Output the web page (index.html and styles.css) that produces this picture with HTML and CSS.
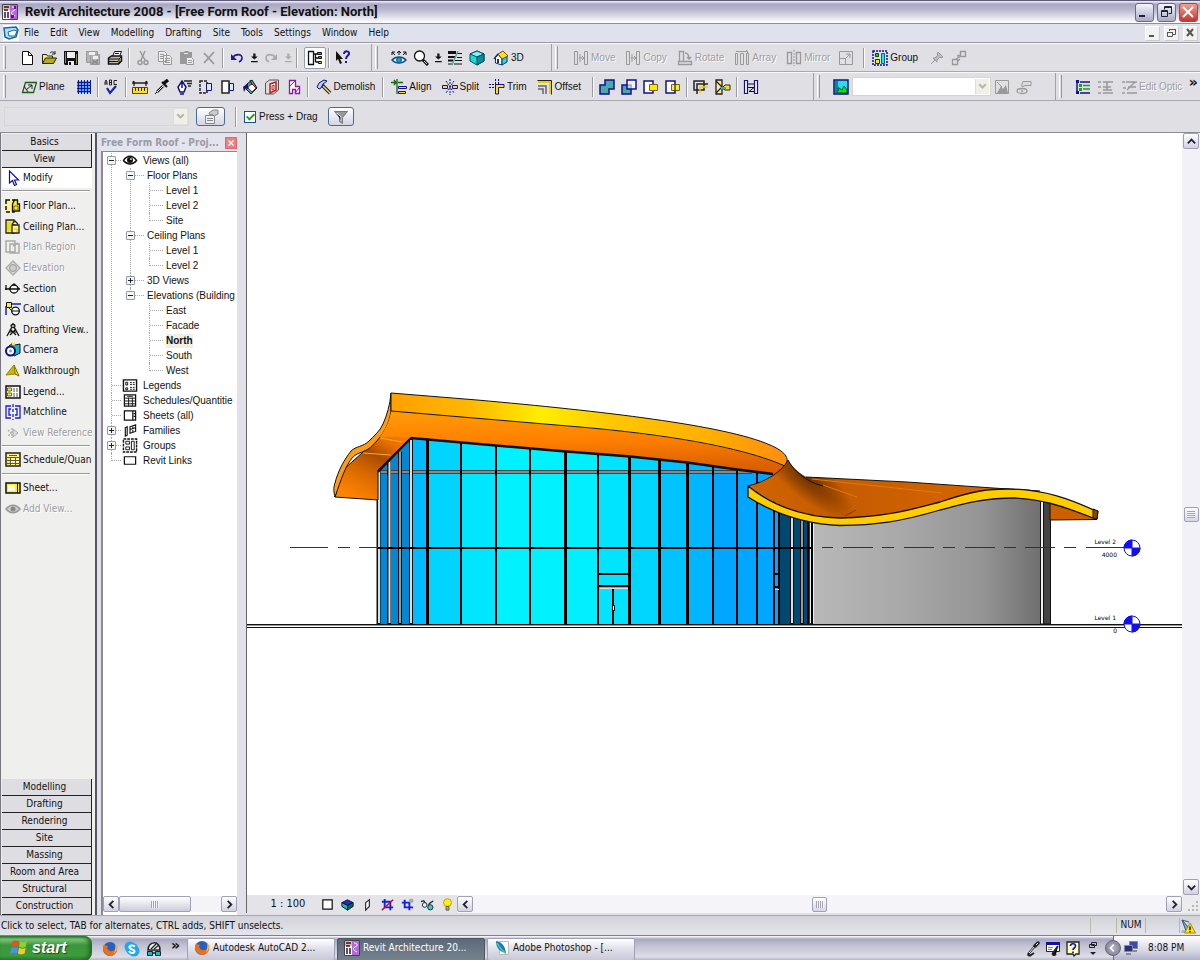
FILE: index.html
```
<!DOCTYPE html>
<html lang="en">
<head>
<meta charset="utf-8">
<title>Revit Architecture 2008 - [Free Form Roof - Elevation: North]</title>
<link rel="stylesheet" href="styles.css">
</head>
<body>
<header class="title-bar">
  <svg class="ico" viewBox="0 0 16 16"><path fill="#fff" stroke="#444" d="M.5.5h15v15H.5z"/><path fill="#b06ad8" d="M8 1h7v14H8z"/><path fill="#e8b890" d="M1 1h7v5H1z"/><path stroke="#301030" stroke-width="1.500" fill="none" d="M2 3h5M2 6h4M3 8v6M6 8v6"/><path stroke="#fff" fill="none" d="M10 3c4 0 4 3 1 4s-1 4 2 5"/><path fill="#701080" d="M9 11h3v3H9zM12 2h2v3h-2z"/></svg>
  <h1>Revit Architecture 2008 - [Free Form Roof - Elevation: North]</h1>
  <div class="window-buttons">
    <button aria-label="Minimize"><svg viewBox="0 0 16 16"><path fill="#223" d="M3 11h6v2H3z"/></svg></button>
    <button aria-label="Restore"><svg viewBox="0 0 16 16"><path fill="none" stroke="#223" d="M6.500 5.500v-3h7v7h-3M6 3.500h7M3.500 6.500h6v6h-6zM3 7.500h7"/></svg></button>
    <button class="close" aria-label="Close"><svg viewBox="0 0 16 16"><path stroke="#fff" stroke-width="2" d="M3 3l10 10M13 3L3 13"/></svg></button>
  </div>
</header>

<nav class="menu-bar">
  <svg class="ico" viewBox="0 0 16 16"><path fill="#fff" d="M0 0h16v16H0z"/><path fill="#b8dff0" stroke="#1468a0" stroke-width="1.500" d="M1 3l12-1 2 3-2 7-7 2-4-2z"/><path fill="#fff" stroke="#1468a0" d="M5 7l6-2 3 1-2 5H6z"/></svg>
  <button>File</button><button>Edit</button><button>View</button><button>Modelling</button><button>Drafting</button><button>Site</button><button>Tools</button><button>Settings</button><button>Window</button><button>Help</button>
  <div class="doc-buttons">
    <button aria-label="Minimize view"><svg viewBox="0 0 12 12"><path fill="#555" d="M3 8h5v2H3z"/></svg></button>
    <button aria-label="Restore view"><svg viewBox="0 0 12 12"><path fill="none" stroke="#555" d="M4.500 4V2.500h6v5H8M4 2.500h7M2.500 5.500h5v4h-5zM2 5.500h6"/></svg></button>
    <button aria-label="Close view"><svg viewBox="0 0 12 12"><path stroke="#555" stroke-width="2" d="M3 2l6 7M9 2L3 9"/></svg></button>
  </div>
</nav>

<div class="toolbar-row">
  <div class="band standard">
    <i class="grip"></i>
    <button aria-label="New"><svg class="ico" viewBox="0 0 16 16"><path fill="#fff" stroke="#111" d="M3.500 1.500h6l4 4v9h-10z"/><path fill="none" stroke="#111" d="M9.500 1.500v4h4"/></svg></button>
    <button aria-label="Open"><svg class="ico" viewBox="0 0 16 16"><path fill="#ffef60" stroke="#222" d="M1.500 13.500v-9h4l1 1.500h5v2"/><path fill="#b0ae20" stroke="#222" d="M1.500 13.500l3-5.500h11l-3 5.500z"/><path fill="none" stroke="#222" d="M9 3c2-2 4-1 5 1m0-3v3h-3"/></svg></button>
    <button aria-label="Save"><svg class="ico" viewBox="0 0 16 16"><path fill="#111" d="M1 1h14v14H2l-1-1z"/><path fill="#8c8a50" d="M2 2h1v11H2zM13 4h1v10h-1z"/><path fill="#eee" d="M4 2h8v6H4zM5 11h6v4H5z"/><path fill="#111" d="M6 12h2v3H6z"/></svg></button>
    <button class="off" aria-label="Save to central"><svg class="ico" viewBox="0 0 16 16"><path fill="#b4b4b8" stroke="#999" d="M1.500 1.500h11v11h-11zM5.500 4.500h9v10h-9z"/><path fill="#eee" d="M4 2h6v3H4zM8 6h5v3H8z"/><path stroke="#888" stroke-width="1.500" d="M7 10l6 4M7 14l6-4"/></svg></button>
    <button aria-label="Print"><svg class="ico" viewBox="0 0 16 16"><path fill="#fff" stroke="#111" d="M5.500 6.500l2-5h7l-2 5z"/><path fill="#bbb" stroke="#111" stroke-width="1.500" d="M1.500 8l3-2h10v5l-3 3h-10z"/><path stroke="#111" d="M2 9h10M2 11.500h9M12 9l2-2M8 3.500h4M12 9v5"/><path fill="#fd2" d="M8 10h2v1H8z"/></svg></button>
    <i class="sep"></i>
    <button class="off" aria-label="Cut"><svg class="ico" viewBox="0 0 16 16"><path fill="none" stroke="#999" stroke-width="1.500" d="M5 1l5 9M10 1L6 10"/><circle cx="5" cy="12.500" r="2" fill="none" stroke="#999" stroke-width="1.500"/><circle cx="11" cy="12.500" r="2" fill="none" stroke="#999" stroke-width="1.500"/></svg></button>
    <button class="off" aria-label="Copy"><svg class="ico" viewBox="0 0 16 16"><path fill="#eee" stroke="#999" d="M1.500 1.500h6l2 2v8h-8zM6.500 5.500h6l2 2v7h-8z"/><path stroke="#999" d="M3 4.500h4M3 6.500h3M3 8.500h3M8 8.500h5M8 10.500h5M8 12.500h5"/></svg></button>
    <button class="off" aria-label="Paste"><svg class="ico" viewBox="0 0 16 16"><path fill="#999" d="M1 2h4l1-1h3l1 1h3v5H7v7H1z"/><path fill="#eee" d="M5 3h4v1H5z"/><path fill="#eee" stroke="#999" d="M7.500 7.500h5l2 2v5h-7z"/><path stroke="#999" d="M9 10.500h4M9 12.500h4"/></svg></button>
    <button class="off" aria-label="Delete"><svg class="ico" viewBox="0 0 16 16"><path stroke="#999" stroke-width="1.800" d="M3 3l10 11M13 2L3 13"/></svg></button>
    <i class="sep"></i>
    <button aria-label="Undo"><svg class="ico" viewBox="0 0 16 16"><path fill="none" stroke="#1a1aa0" stroke-width="1.600" d="M3 8c3-4 10-5 10 0 0 2-1 3-3 4"/><path fill="#1a1aa0" d="M2 4v6h6z"/></svg></button>
    <button class="narrow" aria-label="Undo list"><svg class="ico" viewBox="0 0 16 16"><path fill="#111" d="M7 2h3v4h3L8.500 10 4 6h3zM4 12h9v1.500H4z"/></svg></button>
    <button class="off" aria-label="Redo"><svg class="ico" viewBox="0 0 16 16"><path fill="none" stroke="#aaa" stroke-width="1.600" d="M13 8c-3-4-10-5-10 0 0 2 1 3 3 4"/><path fill="#aaa" d="M14 4v6H8z"/></svg></button>
    <button class="narrow off" aria-label="Redo list"><svg class="ico" viewBox="0 0 16 16"><path fill="#aaa" d="M7 2h3v4h3L8.500 10 4 6h3zM4 12h9v1.500H4z"/></svg></button>
    <i class="sep"></i>
    <button class="pressed" aria-label="Project browser"><svg class="ico" viewBox="0 0 16 16"><path fill="none" stroke="#111" stroke-width="1.300" d="M1.500 1.500h5v13h-5zM6.500 4h4M8.500 4v8M8.500 8h3M8.500 12h3"/><path fill="#2aa" stroke="#111" d="M10.500 2.500h4v2h-4zM11.500 6.500h3v2h-3z"/><path fill="#dd2" stroke="#111" d="M11.500 11.500h3v2h-3z"/></svg></button>
    <i class="sep"></i>
    <button aria-label="Context help"><svg class="ico" viewBox="0 0 16 16"><path fill="#111" d="M1 1v10l2-2 2 5 2-1-2-4h3z"/><path fill="none" stroke="#1a1aa0" stroke-width="2" d="M9 4c0-4 6-3 5 0-1 2-3 2-3 5"/><path fill="#1a1aa0" d="M10 11h2v2h-2z"/></svg></button>
  </div>
  <div class="band views">
    <i class="grip"></i>
    <button aria-label="Dynamic view"><svg class="ico" viewBox="0 0 16 16"><path fill="#fff" stroke="#124a8a" stroke-width="1.500" d="M1 10c4-4 10-4 14 0-4 4-10 4-14 0z"/><circle cx="8" cy="10" r="2.500" fill="#08b0a8" stroke="#124a8a"/><path fill="none" stroke="#111" d="M1 2l3 3M15 2l-3 3M8 1v4M6 3l2-2 2 2M1 5V2h3M15 5V2h-3"/></svg></button>
    <button aria-label="Zoom"><svg class="ico" viewBox="0 0 16 16"><circle cx="6.500" cy="6" r="5" fill="#fff" stroke="#111" stroke-width="1.300"/><path stroke="#111" stroke-width="3" d="M10 10l5 5"/><path stroke="#ee2" d="M11 11l3 3"/></svg></button>
    <button class="narrow" aria-label="Zoom list"><svg class="ico" viewBox="0 0 16 16"><path fill="#111" d="M7 2h3v4h3L8.500 10 4 6h3zM4 12h9v1.500H4z"/></svg></button>
    <button aria-label="Thin lines"><svg class="ico" viewBox="0 0 16 16"><path stroke="#111" stroke-width="3" d="M1 2.500h8"/><path stroke="#111" stroke-width="2" d="M1 7h7M1 10.500h5"/><path stroke="#111" d="M1 14h4M10 3.500h5M10 7.500h5M8 10.500h7M7 14h8"/><path stroke="#4aa" stroke-width="1.500" d="M11 1L5 15"/></svg></button>
    <button aria-label="Default 3D view"><svg class="ico" viewBox="0 0 16 16"><path fill="#20d8d8" stroke="#064860" d="M1 4l7-3 7 3v7l-7 4-7-4z"/><path fill="#80f0f0" stroke="#064860" d="M1 4l7 3 7-3-7-3z"/><path fill="#089098" stroke="#064860" d="M8 7l7-3v7l-7 4z"/></svg></button>
    <button class="labelled"><svg class="ico" viewBox="0 0 16 16"><path fill="#fff" stroke="#14307a" d="M2.500 7.500L5 4l4 5v6l-6.500-2z"/><path fill="#20d8e8" stroke="#14307a" d="M9 9l5-3v6l-5 3z"/><path fill="#ffe020" stroke="#705008" d="M5 4l5-3 5 5-6 3z"/><path stroke="#14307a" stroke-width="1.500" d="M1 9l4-5"/><path fill="#14307a" d="M4 9h2v4H4z"/></svg>3D</button>
  </div>
  <div class="band edit">
    <i class="grip"></i>
    <button class="labelled off" disabled><svg class="ico" viewBox="0 0 16 16"><path fill="none" stroke="#999" d="M1.500 1.500h3v13h-3zM11.500 1.500h3v13h-3zM7 4v8M6 8h4M9 6l2 2-2 2"/></svg>Move</button>
    <button class="labelled off" disabled><svg class="ico" viewBox="0 0 16 16"><path fill="none" stroke="#999" d="M1.500 1.500h3v13h-3zM11.500 1.500h3v13h-3zM7 4v8M6 8h4M9 6l2 2-2 2"/></svg>Copy</button>
    <button class="labelled off" disabled><svg class="ico" viewBox="0 0 16 16"><path fill="none" stroke="#999" stroke-width="1.300" d="M2.500 1.500h4v10h-4zM1.500 11.500h13v3h-13zM8 3c3 0 4 2 4 6M10 7l2 2 2-2"/></svg>Rotate</button>
    <button class="labelled off" disabled><svg class="ico" viewBox="0 0 16 16"><path fill="none" stroke="#999" d="M1.500 3.500h2v11h-2zM6.500 3.500h3v11h-3zM12.500 3.500h2v11h-2zM2 1.500h11M12 0l2 2-2 2"/></svg>Array</button>
    <button class="labelled off" disabled><svg class="ico" viewBox="0 0 16 16"><path fill="none" stroke="#999" stroke-width="1.300" d="M1.500 2.500h4v11h-4zM10.500 2.500h4v11h-4z"/><path stroke="#999" stroke-dasharray="2 1" d="M8 0v16"/></svg>Mirror</button>
    <button class="off" disabled aria-label="Resize"><svg class="ico" viewBox="0 0 16 16"><path fill="none" stroke="#999" d="M1.500 1.500h13v13h-13zM1.500 8.500h6v6M7 9l5-5M8 4h4v4"/></svg></button>
    <i class="sep lead"></i>
    <button class="labelled"><svg class="ico" viewBox="0 0 16 16"><path fill="none" stroke="#10108c" stroke-width="1.500" stroke-dasharray="2 1" d="M1 1h14v14H1z"/><path fill="#28c828" stroke="#064a10" d="M3.500 3.500h3v3h-3z"/><path fill="#ee2" stroke="#222" d="M3.500 9.500h4v4h-4z"/><path fill="#20e0e8" stroke="#069" d="M9.500 3.500h3v10h-3z"/></svg>Group</button>
    <button class="off lead" disabled aria-label="Pin"><svg class="ico" viewBox="0 0 16 16"><path fill="#bbb" stroke="#999" d="M9 2l5 5-2 1-1-1-3 3v2L4 8h2l3-3-1-1zM6 10l-4 4"/></svg></button>
    <button class="off" disabled aria-label="Link"><svg class="ico" viewBox="0 0 16 16"><path fill="none" stroke="#999" stroke-width="1.300" d="M9.500 1.500h5v5h-5zM1.500 9.500h5v5h-5zM5 9l5-3M6 6l4-1M7 11l2-2"/></svg></button>
  </div>
</div>

<div class="toolbar-row">
  <div class="band tools">
    <i class="grip"></i>
    <button class="labelled"><svg class="ico" viewBox="0 0 16 16"><path fill="none" stroke="#146414" stroke-width="1.300" d="M4.500 3.500h11l-3 10h-11z"/><path stroke="#222" fill="none" d="M5 11l6-5M7 6h4v4M3 7l4 6"/></svg>Plane</button>
    <button class="lead" aria-label="Grid"><svg class="ico" viewBox="0 0 16 16"><path fill="#6aa4f8" d="M1 2h14v12H1z"/><path stroke="#0a1a9c" d="M2.500 1v14M5.500 1v14M8.500 1v14M11.500 1v14M1 3.500h14M1 6.500h14M1 9.500h14M1 12.500h14M14.500 1v14"/></svg></button>
    <i class="sep"></i>
    <button aria-label="Spelling"><svg class="ico" viewBox="0 0 16 16"><path fill="none" stroke="#222" d="M1 6V3l1-2 1 2v3M1 4h2M5.500 1v5h2V1zM5 3.500h3M13 1.500h-3v4h3"/><path fill="none" stroke="#1428a0" stroke-width="2.200" d="M3 9l3 5 6-7"/></svg></button>
    <i class="sep"></i>
    <button aria-label="Dimension"><svg class="ico" viewBox="0 0 16 16"><path fill="none" stroke="#222" stroke-width="1.300" d="M2 7V2M14 7V2M0 4h16M1 2l2 3M13 5l2-3"/><path fill="#ffe020" stroke="#554400" d="M.5 8.500h15v6H.5z"/><path stroke="#222" d="M3.500 9v3M6.500 9v3M9.500 9v3M12.500 9v3"/></svg></button>
    <button aria-label="Match type"><svg class="ico" viewBox="0 0 16 16"><path stroke="#111" stroke-width="3.500" d="M9 5l5-4"/><path stroke="#111" stroke-width="2" d="M8 3l5 5"/><path stroke="#111" stroke-width="2.500" d="M9 7l-6 6"/><path stroke="#fff" d="M9 7l-6 6"/><path stroke="#111" d="M3 13l-2 2"/></svg></button>
    <button aria-label="Linework"><svg class="ico" viewBox="0 0 16 16"><path fill="#fff" stroke="#12127c" stroke-width="1.500" d="M6 2l4 6-2 5H4L2 8zM6 3v6M4 15h4"/><path stroke="#222" stroke-width="1.500" d="M8 2h8M11 4.500h5M12 7h3"/></svg></button>
    <button aria-label="Split face"><svg class="ico" viewBox="0 0 16 16"><path fill="none" stroke="#222" stroke-width="1.500" stroke-dasharray="3 1" d="M2 2h7v12H2z"/><path fill="#d8e8ff" stroke="#12128c" d="M8.500 4.500h5v7h-5z"/></svg></button>
    <button aria-label="Paint face"><svg class="ico" viewBox="0 0 16 16"><path fill="#fff" stroke="#222" stroke-width="1.500" d="M2 2h7v12H2z"/><path fill="#d8e8ff" stroke="#12128c" d="M9.500 4.500h4v7h-4z"/></svg></button>
    <button aria-label="Paint"><svg class="ico" viewBox="0 0 16 16"><path fill="#2ab0b0" stroke="#111" d="M5 5l5-4 5 8-6 6-5-5z"/><path fill="#fff" stroke="#a02020" d="M7 7l3-2 4 4-4 4-4-4z"/><path fill="#12127c" d="M1 8l5-4v6l-2-1-2 4z"/><path stroke="#111" d="M8 1l2 5"/></svg></button>
    <button aria-label="Opening"><svg class="ico" viewBox="0 0 16 16"><path fill="#ddd" stroke="#555" d="M1.500 4l4-3h9v10l-5 4h-8z"/><path fill="#fff" stroke="#c81818" stroke-width="1.500" d="M6 5l6-2v8l-6 3z"/><path fill="none" stroke="#c81818" d="M8 7l2-1v4l-2 1z"/></svg></button>
    <button aria-label="Wall joins"><svg class="ico" viewBox="0 0 16 16"><path fill="#fff" stroke="#8a18a0" stroke-width="1.300" d="M3.500 1.500h6v6h4v7h-4v-4h-3v4h-3z"/><path stroke="#8a18a0" d="M3 8l6-6M9 14l4-5"/></svg></button>
    <i class="sep"></i>
    <button class="labelled"><svg class="ico" viewBox="0 0 16 16"><path stroke="#11116c" stroke-width="3.500" d="M6 6l8 8"/><path stroke="#ffe020" stroke-width="1.500" d="M7 7l7 7"/><path fill="#b8d0f0" stroke="#11116c" d="M1 8l2-4 5-3 3 1-4 3-2 4-2 1z"/></svg>Demolish</button>
    <i class="sep"></i>
    <button class="labelled"><svg class="ico" viewBox="0 0 16 16"><path fill="none" stroke="#146414" stroke-width="1.300" d="M6 0v15M0 3.500h5M3 1l2 2.500L3 6M12 3.500H7"/><path fill="#ffe020" stroke="#12128c" d="M7.500 7.500h8v2h-8zM7.500 12.500h7v2h-7z"/></svg>Align</button>
    <button class="labelled"><svg class="ico" viewBox="0 0 16 16"><path stroke="#12128c" stroke-dasharray="2 1" d="M8 0v16M4 2l8 12M12 2L4 14"/><path fill="#ffe020" stroke="#12128c" d="M.5 6.500h5v3h-5zM10.500 6.500h5v3h-5z"/></svg>Split</button>
    <button class="labelled"><svg class="ico" viewBox="0 0 16 16"><path stroke="#12128c" stroke-dasharray="2 1" d="M0 5.500h7M0 8.500h6M6.500 0v6M9.500 0v5"/><path fill="#ffe020" stroke="#12128c" d="M6.500 15v-9.500H15v3H9.500V15z"/></svg>Trim</button>
    <button class="labelled"><svg class="ico" viewBox="0 0 16 16"><path fill="none" stroke="#222" d="M.5 1.500h14v14"/><path fill="none" stroke="#e8d000" stroke-width="2" d="M1 3h12v12"/><path fill="none" stroke="#666" stroke-width="1.500" d="M1 7h8v8M1 10h5v5"/></svg>Offset</button>
    <i class="sep lead"></i>
    <button aria-label="Join"><svg class="ico" viewBox="0 0 16 16"><path fill="#4aa8a8" stroke="#12128c" stroke-width="1.500" d="M6 1h9v9h-5v5H1V6h5z"/></svg></button>
    <button aria-label="Unjoin"><svg class="ico" viewBox="0 0 16 16"><path fill="#4aa8a8" stroke="#12128c" stroke-width="1.500" d="M1 6h9v9H1z"/><path fill="#fff" fill-opacity=".6" stroke="#12128c" stroke-width="1.500" d="M6 1h9v9H6z"/></svg></button>
    <button aria-label="Cut geometry"><svg class="ico" viewBox="0 0 16 16"><path fill="#fff" stroke="#12128c" stroke-width="1.500" d="M1 2h9v12H1z"/><path fill="#ffe800" stroke="#776600" d="M6.500 5.500h8v6h-8z"/></svg></button>
    <button aria-label="Uncut geometry"><svg class="ico" viewBox="0 0 16 16"><path fill="#fff" stroke="#12128c" stroke-width="1.500" d="M1 2h9v12H1z"/><path fill="#ffe800" fill-opacity=".8" stroke="#776600" d="M6.500 5.500h8v6h-8z"/><path stroke="#12128c" d="M10 5v7"/></svg></button>
    <i class="sep"></i>
    <button aria-label="Edit wall joins"><svg class="ico" viewBox="0 0 16 16"><path fill="none" stroke="#222" stroke-width="1.500" d="M1 2h10v9H1zM4 15V5h11"/><path fill="none" stroke="#e8d000" stroke-width="1.300" d="M7 14V8h8"/></svg></button>
    <button aria-label="Cope"><svg class="ico" viewBox="0 0 16 16"><path fill="#ffe8a0" stroke="#222" stroke-width="1.300" d="M1 1h6v14H1zM1 2l6 6-6 6"/><path fill="#ffe020" stroke="#222" d="M7 9l3-3h5v5h-5z"/><path fill="#20b0d8" d="M6 8h5v2H6z"/></svg></button>
    <i class="sep"></i>
    <button aria-label="Match length"><svg class="ico" viewBox="0 0 16 16"><path fill="#fff" stroke="#12128c" stroke-width="1.200" d="M1.500 1.500h3v13h-3zM11.500 1.500h3v13h-3z"/><path fill="none" stroke="#111" d="M5 5h6M5 8.500h6l-5 4h5"/></svg></button>
  </div>
  <div class="band images">
    <i class="grip"></i>
    <button aria-label="Raster image"><svg class="ico" viewBox="0 0 16 16"><path fill="#20e0f0" stroke="#12127c" stroke-width="1.500" d="M1 1h14v14H1z"/><path fill="#088888" d="M2 2h3v5l2 3-2 4H2z"/><path fill="#18e018" stroke="#064a40" d="M4 14l2-5 3 2 2-4 3 4v3z"/></svg></button>
    <label class="combo"><select aria-label="Image type"><option></option></select><svg viewBox="0 0 12 12"><path fill="none" stroke="#b8b8a8" stroke-width="2" d="M3 4l3 3 3-3"/></svg></label>
    <button class="off" disabled aria-label="Image settings"><svg class="ico" viewBox="0 0 16 16"><path fill="none" stroke="#999" d="M1.500 1.500h13v13h-13z"/><path fill="#999" d="M3 14l4-7 2 3 3-4 2 8z"/><path stroke="#999" d="M3 3l5 5"/></svg></button>
    <button class="off" disabled aria-label="Image link"><svg class="ico" viewBox="0 0 16 16"><path fill="#ddd" stroke="#999" d="M7 2.500h8v4H9L6 8V5z"/><ellipse cx="6" cy="12" rx="5" ry="2.500" fill="none" stroke="#999" stroke-width="1.300"/><circle cx="6" cy="12" r="1" fill="#999"/></svg></button>
  </div>
  <div class="band design">
    <i class="grip"></i>
    <button aria-label="Design options"><svg class="ico" viewBox="0 0 16 16"><path stroke="#12128c" stroke-width="1.500" d="M5 3h10M5 14h10M2 1v13"/><path stroke="#18a018" stroke-width="1.500" d="M8 6.500h7M8 10h7"/><path fill="#12128c" d="M1 1h3v3H1zM1 12h3v3H1z"/><path fill="#18a018" d="M4 5h3v3H4zM4 9h3v3H4z"/></svg></button>
    <button class="off" disabled aria-label="Add option"><svg class="ico" viewBox="0 0 16 16"><path stroke="#999" stroke-width="1.500" d="M6 3h10M6 14h10M6 8h8M10 3v8M1 3h3M1 8h3M1 14h3M6 11h9"/></svg></button>
    <button class="labelled off" disabled><svg class="ico" viewBox="0 0 16 16"><path fill="none" stroke="#999" stroke-width="1.300" d="M5 3h11M7 8h8M6 14h10M1 3h3M2 9h3M1 14h3M6 11l8-8"/></svg>Edit Optic</button>
    <button class="more" aria-label="More tools">»</button>
  </div>
</div>

<div class="options-bar">
  <label class="combo type"><select aria-label="Element type" disabled><option></option></select><svg viewBox="0 0 12 12"><path fill="none" stroke="#b8b8a8" stroke-width="2" d="M3 4l3 3 3-3"/></svg></label>
  <button class="xp" aria-label="Properties"><svg class="ico" viewBox="0 0 16 16"><path fill="#eee" stroke="#888" d="M2.500 6.500h9v8h-9z"/><path stroke="#888" d="M4 9.500h6M4 11.500h6"/><path fill="#ccc" stroke="#888" d="M6 4l4-3h5v4l-4 2-2-2-2 1z"/></svg></button>
  <i class="sep tall"></i>
  <label class="check"><input type="checkbox" checked><span>Press + Drag</span></label>
  <button class="xp filter" aria-label="Filter"><svg class="ico" viewBox="0 0 16 16"><path fill="#999" stroke="#777" d="M1.500 2.500h13l-5 6v6l-3-2v-4z"/><path stroke="#eee" d="M4 4l4 4v4"/></svg></button>
</div>

<main class="workspace">
  <aside class="design-bar">
    <button class="tab">Basics</button>
    <button class="tab">View</button>
    <button class="tool modify"><svg class="ico" viewBox="0 0 16 16"><path fill="#fff" stroke="#12129c" stroke-width="1.200" d="M4.500 1v12l3-2.500 2 5 2-1-2-4.500h4z"/></svg>Modify</button>
    <hr>
    <div class="tools-list">
      <button class="tool"><svg class="ico" viewBox="0 0 16 16"><path fill="#fff48a" stroke="#111" stroke-width="1.500" stroke-dasharray="4 2" d="M1 2h8v12H1z"/><path fill="#ffee20" stroke="#111" stroke-width="1.300" d="M7.500 6l2-4h3v4h2v7h-7z"/><path fill="none" stroke="#776600" d="M9 8h4v4H9z"/></svg>Floor Plan...</button>
      <button class="tool"><svg class="ico" viewBox="0 0 16 16"><path fill="#ffee20" stroke="#222" stroke-width="1.300" d="M1 1h8v13H1z"/><path fill="#fff48a" stroke="#222" stroke-width="1.300" d="M7 6h7v8H7zM7 5l3-3 3 3"/><path fill="none" stroke="#d8c800" d="M3 3v9M5 3v9M9 10h3v3"/></svg>Ceiling Plan...</button>
      <button class="tool off" disabled><svg class="ico" viewBox="0 0 16 16"><path fill="none" stroke="#aaa" stroke-width="1.500" d="M1 2h9v11H1zM5 5h9v9H5zM8 7l5-3"/></svg>Plan Region</button>
      <button class="tool off" disabled><svg class="ico" viewBox="0 0 16 16"><path fill="#ddd" stroke="#aaa" stroke-width="1.300" d="M8 1l7 7-7 7-7-7z"/><circle cx="8" cy="8" r="3.500" fill="#ccc" stroke="#999"/></svg>Elevation</button>
      <button class="tool"><svg class="ico" viewBox="0 0 16 16"><path fill="#111" d="M3 8l6-6 6 6z"/><circle cx="9" cy="8" r="4" fill="#fff" stroke="#111" stroke-width="1.300"/><path stroke="#111" stroke-width="1.300" d="M0 8h15M1 4v5"/></svg>Section</button>
      <button class="tool"><svg class="ico" viewBox="0 0 16 16"><path fill="none" stroke="#1422c0" stroke-width="1.500" d="M1 5v9M5 3h11"/><path fill="#ffee20" stroke="#111" d="M1.500 1.500h5v5h-5zM4 7l4 4"/><circle cx="10.500" cy="10" r="3.800" fill="#fff" stroke="#111" stroke-width="1.300"/><path stroke="#111" d="M6 10h9"/></svg>Callout</button>
      <button class="tool"><svg class="ico" viewBox="0 0 16 16"><path fill="none" stroke="#111" stroke-width="1.300" d="M7 5L2 14M9 5l5 9M8 1v2M6 4c0-2 4-2 4 0s-4 2-4 0M4 9c3 2 5 2 8 0M5 7l6 6M11 7l-6 6"/></svg>Drafting View..</button>
      <button class="tool"><svg class="ico" viewBox="0 0 16 16"><path fill="#20b8c0" stroke="#111" d="M4 4l4-3 2 2 5-1v9l-6 3z"/><circle cx="5.500" cy="9" r="4.500" fill="#fff" stroke="#12127c" stroke-width="2"/><circle cx="5.500" cy="9" r="1.500" fill="#6ad"/><path fill="#fe2" d="M7 1h3v2H7z"/></svg>Camera</button>
      <button class="tool"><svg class="ico" viewBox="0 0 16 16"><path fill="#f0e020" stroke="#776600" d="M9 2l5 11-4-2z"/><path fill="#c8b800" stroke="#998800" d="M9 2L5 7l-4 5 9-1z"/></svg>Walkthrough</button>
      <button class="tool"><svg class="ico" viewBox="0 0 16 16"><path fill="#fff" stroke="#111" stroke-width="1.500" d="M1 2h14v12H1z"/><path fill="#ffee20" stroke="#665" d="M2.500 4h4v3h-4zM2.500 9h4v3h-4z"/><path stroke="#555" stroke-dasharray="2 1" d="M8 5h6M8 7h6M8 10h6M8 12h5"/></svg>Legend...</button>
      <button class="tool"><svg class="ico" viewBox="0 0 16 16"><path fill="none" stroke="#1a1ae0" stroke-width="1.300" d="M6 2H1v12h5M10 2h5v12h-5M6 5H4v6h2M10 5h2v6h-2"/><path stroke="#1a1ae0" stroke-width="1.300" stroke-dasharray="3 2" d="M8 0v16"/></svg>Matchline</button>
      <button class="tool off" disabled><svg class="ico" viewBox="0 0 16 16"><path fill="none" stroke="#aaa" stroke-width="1.300" stroke-dasharray="2 1" d="M7 3v10M3 5l3 3-3 3"/><path fill="#ddd" stroke="#aaa" d="M8 4l5 4-5 4z"/></svg>View Reference</button>
    </div>
    <hr>
    <button class="tool spaced"><svg class="ico" viewBox="0 0 16 16"><path fill="#fff48a" stroke="#222" stroke-width="1.500" d="M1 1h14v13H1z"/><path fill="#ffee20" d="M2 6h4v7H2z"/><path stroke="#555" d="M1 5.500h14M1 8.500h14M1 11.500h14M5.500 5v9M10.500 5v9M4 3.500h8"/></svg>Schedule/Quan</button>
    <hr>
    <button class="tool spaced"><svg class="ico" viewBox="0 0 16 16"><path fill="#ffee20" stroke="#111" stroke-width="1.500" d="M1 3h14v10H1z"/><path fill="#fffbd0" d="M3 5h7v6H3z"/><path fill="#bbb" stroke="#111" d="M12.500 3v10"/></svg>Sheet...</button>
    <button class="tool off" disabled><svg class="ico" viewBox="0 0 16 16"><path fill="#ccc" stroke="#999" stroke-width="1.500" d="M1 8c4-5 10-5 14 0-4 5-10 5-14 0z"/><circle cx="8" cy="8" r="2.500" fill="#888"/></svg>Add View...</button>
    <div class="tab-stack">
      <button class="tab">Modelling</button><button class="tab">Drafting</button><button class="tab">Rendering</button><button class="tab">Site</button><button class="tab">Massing</button><button class="tab">Room and Area</button><button class="tab">Structural</button><button class="tab">Construction</button>
    </div>
  </aside>

  <section class="browser">
    <header><h2>Free Form Roof - Proj...</h2><button aria-label="Close browser"><svg viewBox="0 0 12 12"><path stroke="#fff" stroke-width="1.500" d="M3 3l6 6M9 3L3 9"/></svg></button></header>
    <div class="tree-box">
      <ul class="tree root">
        <li><div class="row"><button class="tog minus" aria-label="Collapse"></button><svg class="ico" viewBox="0 0 16 16"><path fill="#fff" stroke="#111" stroke-width="1.500" d="M1 8c4-6 10-6 14 0-4 5-10 5-14 0z"/><circle cx="8" cy="7.500" r="3.200" fill="#111"/><circle cx="9" cy="6.500" r="1" fill="#fff"/></svg><span>Views (all)</span></div>
          <ul class="tree">
            <li><div class="row"><button class="tog minus" aria-label="Collapse"></button><span>Floor Plans</span></div>
              <ul class="tree"><li><div class="row"><span>Level 1</span></div></li><li><div class="row"><span>Level 2</span></div></li><li><div class="row"><span>Site</span></div></li></ul></li>
            <li><div class="row"><button class="tog minus" aria-label="Collapse"></button><span>Ceiling Plans</span></div>
              <ul class="tree"><li><div class="row"><span>Level 1</span></div></li><li><div class="row"><span>Level 2</span></div></li></ul></li>
            <li><div class="row"><button class="tog" aria-label="Expand"></button><span>3D Views</span></div></li>
            <li><div class="row"><button class="tog minus" aria-label="Collapse"></button><span>Elevations (Building</span></div>
              <ul class="tree"><li><div class="row"><span>East</span></div></li><li><div class="row"><span>Facade</span></div></li><li><div class="row"><span class="current">North</span></div></li><li><div class="row"><span>South</span></div></li><li><div class="row"><span>West</span></div></li></ul></li>
          </ul></li>
        <li><div class="row"><svg class="ico" viewBox="0 0 16 16"><path fill="#fff" stroke="#111" stroke-width="1.500" d="M1 2h14v12H1z"/><path fill="none" stroke="#111" d="M3.500 4.500h2v3h-2zM3.500 10.500h2v2h-2z"/><path stroke="#111" stroke-dasharray="2 1" d="M8 5h6M8 7h5M8 10h6M8 12h5"/></svg><span>Legends</span></div></li>
        <li><div class="row"><svg class="ico" viewBox="0 0 16 16"><path fill="#fff" stroke="#111" stroke-width="1.300" d="M2 2h12v12H2z"/><path stroke="#111" d="M2 5.500h12M2 8.500h12M2 11.500h12M6.500 5v9M10.500 5v9M5 3.500h6"/></svg><span>Schedules/Quantitie</span></div></li>
        <li><div class="row"><svg class="ico" viewBox="0 0 16 16"><path fill="#fff" stroke="#111" stroke-width="1.300" d="M2 3h12v10H2zM11 3v10M12 6h2M12 9h2"/></svg><span>Sheets (all)</span></div></li>
        <li><div class="row"><button class="tog" aria-label="Expand"></button><svg class="ico" viewBox="0 0 16 16"><path fill="#fff" stroke="#111" stroke-width="1.200" d="M3 5l2-1v9l-2 1zM8 4l6-2v7l-6 2zM8 7l6-2M11 3v7"/></svg><span>Families</span></div></li>
        <li><div class="row"><button class="tog" aria-label="Expand"></button><svg class="ico" viewBox="0 0 16 16"><path fill="none" stroke="#111" stroke-width="1.500" stroke-dasharray="3 1" d="M1 1h14v14H1z"/><path fill="#fff" stroke="#111" d="M3.500 3.500h4v3h-4zM3.500 9.500h4v3h-4zM9.500 3.500h3v9h-3z"/></svg><span>Groups</span></div></li>
        <li><div class="row"><svg class="ico" viewBox="0 0 16 16"><path fill="#fff" stroke="#111" stroke-width="1.300" d="M2 4h12v8H2z"/></svg><span>Revit Links</span></div></li>
      </ul>
      <div class="hscroll">
        <button class="sb" aria-label="Scroll left"><svg viewBox="0 0 12 12"><path fill="none" stroke="#223" stroke-width="2" d="M8 2L4 6l4 4"/></svg></button>
        <span class="thumb"><i class="ridge"></i></span>
        <button class="sb" aria-label="Scroll right"><svg viewBox="0 0 12 12"><path fill="none" stroke="#223" stroke-width="2" d="M4 2l4 4-4 4"/></svg></button>
      </div>
    </div>
  </section>

  <section class="view">
    <svg class="drawing" viewBox="247 133 935 762" preserveAspectRatio="xMidYMid meet" role="img" aria-label="North elevation">
      <defs>
        <linearGradient id="fascia"><stop offset="0" stop-color="#ffa000"/><stop offset=".2" stop-color="#ffb800"/><stop offset=".38" stop-color="#ffee00"/><stop offset=".55" stop-color="#ffc800"/><stop offset=".8" stop-color="#ffb000"/><stop offset="1" stop-color="#ff8c10"/></linearGradient>
        <linearGradient id="soffit" x1="0" y1="0" x2=".12" y2="1"><stop offset="0" stop-color="#ff9c08"/><stop offset=".5" stop-color="#ff8000"/><stop offset="1" stop-color="#d85e00"/></linearGradient>
        <linearGradient id="wing" gradientUnits="userSpaceOnUse" x1="395" y1="415" x2="352" y2="497"><stop offset="0" stop-color="#ff8c00"/><stop offset=".3" stop-color="#e87000"/><stop offset=".48" stop-color="#a84c00"/><stop offset=".7" stop-color="#d86800"/><stop offset="1" stop-color="#ff8400"/></linearGradient>
        <radialGradient id="sweep" gradientUnits="userSpaceOnUse" cx="0" cy="0" r="1" gradientTransform="translate(806 477) rotate(40) scale(60 20)"><stop offset="0" stop-color="#6c3000"/><stop offset=".5" stop-color="#6c3000" stop-opacity=".55"/><stop offset="1" stop-color="#6c3000" stop-opacity="0"/></radialGradient>
        <linearGradient id="back"><stop offset="0" stop-color="#d06400"/><stop offset=".3" stop-color="#c45c00"/><stop offset="1" stop-color="#dc6800"/></linearGradient>
        <linearGradient id="wall"><stop offset="0" stop-color="#b8b8b8"/><stop offset=".4" stop-color="#a8a8a8"/><stop offset=".75" stop-color="#949494"/><stop offset="1" stop-color="#707070"/></linearGradient>
      </defs>
      <!-- curved masonry wall -->
      <path fill="url(#wall)" d="M813 520L880 522 940 508 1000 497H1040V624H813z"/>
      <path fill="#eee" stroke="#111" d="M1040.500 499h3v125h-3z"/>
      <path fill="#444" stroke="#111" d="M1043.500 499l7 3v122h-7z"/>
      <!-- glazing -->
      <g>
        <path fill="#0088d4" d="M378 470l33-33v187h-33z"/>
        <path fill="#00bcff" d="M411 437l16 2v185h-16z"/>
        <path fill="#00d4ff" d="M427 439l34 3v182h-34z"/>
        <path fill="#00e6ff" d="M461 442l35 4v178h-35z"/>
        <path fill="#00f2ff" d="M496 445l69 6v173h-69z"/>
        <path fill="#00f0ff" d="M565 451l33 3v170h-33z"/>
        <path fill="#00e4ff" d="M598 454l32 3v167h-32z"/>
        <path fill="#00d6ff" d="M630 456l29 3v165h-29z"/>
        <path fill="#00c4ff" d="M659 459l28 3v162h-28z"/>
        <path fill="#00b6ff" d="M687 462l26 3v159h-26z"/>
        <path fill="#00a6ff" d="M713 465l66 9v150h-66z"/>
        <path fill="#004870" d="M779 500h34v124h-34z"/>
      </g>
      <path fill="none" stroke="#888" stroke-width="3" d="M378 471.500h374"/>
      <path fill="none" stroke="#444" stroke-width="1" d="M378 470.500h374M378 473.500h374"/>
      <path fill="none" stroke="#000" stroke-width="3" d="M427.500 438v187M565.500 450v175M629.500 456v169M659.500 459v166M687.500 462v163"/>
      <path fill="none" stroke="#000" stroke-width="2" d="M461 442v183M598 454v171M496 446v179M530 448v177M713 465v160M737 469v156M757 473v152M774 500v125M779 500v125M378 548h435M598 574h32M598 586h32M774 574h6M774 587h6M613 588v37"/>
      <path fill="none" stroke="#ddd" stroke-width="1" d="M600 588.500h28M775 589.500h4"/>
      <path fill="#fff" stroke="#000" d="M612.500 605.500h2v5h-2z"/>
      <path fill="none" stroke="#111" stroke-width="4" d="M378.500 470v154M389 462v162M400 452v172M411 438v186M792 513v111M802 516v108"/>
      <path fill="none" stroke="#ddd" stroke-width="2" d="M379 471v152M389.500 462v161M411 440v183M792 514v109"/>
      <path fill="none" stroke="#999" stroke-width="2" d="M400 452v171M802 516v107"/>
      <path fill="none" stroke="#000" stroke-width="2" d="M808 518v106M812 520v104"/>
      <path fill="none" stroke="#eee" stroke-width="1" d="M810.500 520v103M813.500 520v103"/>
      <path fill="none" stroke="#000" stroke-width="2" d="M378 548h435"/>
      <!-- left wing of the roof -->
      <path fill="url(#wing)" stroke="#111" d="M391 411L383 432 363 452 343 470 335 497 378 500V470L411 437z"/>
      <path fill="#ff9c10" stroke="#111" d="M391 393C390 405 387 415 383 424C380 431 374 436 369 441C363 447 356 446 351 451C344 460 338 471 335 483C333 488 334 493 335 497C341 480 345 466 353 457C358 452 367 452 373 445C384 434 389 424 391 411z"/>
      <path fill="none" stroke="#ffa838" d="M380 438l22 4M363 453l28 2"/>
      <!-- front sweep -->
      <path fill="url(#soffit)" d="M391 411L580 427C660 435 735 445 785 466L780 475 737 469 630 456 560 450.500 411 437 380 437C386 428 390 420 391 411z"/>
      <path fill="none" stroke="#111" stroke-width="2.500" d="M411 438L560 451 630 456.500 687 462.500 737 469.500 773 474"/>
      <path fill="url(#fascia)" stroke="#111" d="M391 393L477 400C600 411 725 425 770 445C784 451 791 458 785 466C740 446 660 434 580 427L391 411z"/>
      <path fill="none" stroke="#111" stroke-width="2" d="M378 472l33-34"/>
      <!-- rear roof plane and twisted front -->
      <path fill="#cc6000" stroke="#111" d="M1050 500L1098 511 1097 519.500 1050 520z"/>
      <path fill="url(#back)" d="M748 486C765 482 782 472 788 460C792 467 799 473 806 477L907 482 993 488 1040 491 973 497 907 514 840 520C805 518 780 508 748 486z"/>
      <path fill="url(#sweep)" d="M748 486C765 482 782 472 788 460C792 467 799 473 806 477L907 482V514L840 520C805 518 780 508 748 486z"/>
      <path fill="none" stroke="#111" d="M806 477L907 482 993 488 1040 491M748 486C765 482 782 472 788 460C793 470 806 482 823 486"/>
      <path fill="none" stroke="#e87800" d="M812 479l130 14M823 485l34 12"/>
      <path fill="none" stroke="#803800" d="M845 516l11-6"/>
      <path fill="#ffcc00" stroke="#111" stroke-width="1.300" d="M748 486C775 508 805 517 840 518C890 517 920 507 940 502C975 490 990 489 1007 489C1045 489 1072 500 1096 511L1093 518C1060 505 1040 499 1015 498C980 498 960 505 940 510C900 522 875 525 840 525.500C805 524 775 514 748 497z"/>
      <path fill="#8c4800" stroke="#111" d="M1093 509l5 2-1 8-4-1z"/>
      <!-- levels and ground -->
      <path fill="none" stroke="#333" d="M290 547.500h38M338 547.500h12M359 547.500h19M822 547.500h11M843 547.500h30M882 547.500h12M904 547.500h30M943 547.500h12M965 547.500h30M1004 547.500h12M1025 547.500h30M1064 547.500h12M1086 547.500h46"/>
      <path fill="none" stroke="#999" d="M247 625.500h935"/>
      <path fill="none" stroke="#111" d="M247 624.500h935M247 627.500h935"/>
      <g stroke="#1010f0"><circle cx="1132" cy="548" r="8" fill="#fff"/><path fill="#1010f0" d="M1132 548v-8a8 8 0 0 0-8 8zM1132 548v8a8 8 0 0 0 8-8z"/><circle cx="1132" cy="624" r="8" fill="#fff"/><path fill="#1010f0" d="M1132 624v-8a8 8 0 0 0-8 8zM1132 624v8a8 8 0 0 0 8-8z"/></g>
      <g class="level-text" text-anchor="end"><text x="1116" y="544">Level 2</text><text x="1117" y="557">4000</text><text x="1116" y="620">Level 1</text><text x="1117" y="633">0</text></g>
    </svg>
    <div class="vscroll">
      <button class="sb" aria-label="Scroll up"><svg viewBox="0 0 12 12"><path fill="none" stroke="#223" stroke-width="2" d="M2 8l4-4 4 4"/></svg></button>
      <span class="knob"><i class="ridge rows"></i></span>
      <button class="sb" aria-label="Scroll down"><svg viewBox="0 0 12 12"><path fill="none" stroke="#223" stroke-width="2" d="M2 4l4 4 4-4"/></svg></button>
    </div>
    <div class="view-bar">
      <div class="view-controls">
        <button class="scale">1 : 100</button>
        <button aria-label="Detail level"><svg class="ico" viewBox="0 0 16 16"><path fill="#fff" stroke="#111" stroke-width="1.300" d="M3 3h10v10H3z"/></svg></button>
        <button aria-label="Model graphics"><svg class="ico" viewBox="0 0 16 16"><path fill="#1a2ae8" stroke="#111" d="M2 6l6-3 6 3-6 3z"/><path fill="#20b8c0" stroke="#111" d="M2 6v4l6 4V9z"/><path fill="#066" stroke="#111" d="M14 6v4l-6 4V9z"/></svg></button>
        <button aria-label="Shadows"><svg class="ico" viewBox="0 0 16 16"><path fill="#fff" stroke="#333" stroke-width="1.300" d="M6 6l4-3v7l-4 4z"/></svg></button>
        <button aria-label="Crop"><svg class="ico" viewBox="0 0 16 16"><path fill="none" stroke="#1020e0" stroke-width="2" d="M5 2v9h9M2 5h9v9"/><path stroke="#c01020" stroke-width="1.500" d="M2 14L14 3"/></svg></button>
        <button aria-label="Show crop"><svg class="ico" viewBox="0 0 16 16"><path fill="none" stroke="#1020e0" stroke-width="2" d="M5 3v8h9M2 6h8v8"/><circle cx="12" cy="4" r="2.500" fill="#aaa"/></svg></button>
        <button aria-label="Temporary hide"><svg class="ico" viewBox="0 0 16 16"><path fill="none" stroke="#223" stroke-width="1.300" d="M1 5l3-1 3 5M9 9c1-4 4-3 5-5"/><circle cx="5" cy="8.500" r="2.500" fill="#cfe" stroke="#223"/><circle cx="11" cy="11" r="2.800" fill="#3cc" stroke="#223"/></svg></button>
        <button aria-label="Reveal hidden"><svg class="ico" viewBox="0 0 16 16"><circle cx="8" cy="6" r="4.200" fill="#ffee20" stroke="#b8a000"/><path fill="#ccb800" stroke="#554" d="M6.500 10h3v4h-3z"/></svg></button>
      </div>
      <div class="track">
        <button class="sb" aria-label="Scroll left"><svg viewBox="0 0 12 12"><path fill="none" stroke="#223" stroke-width="2" d="M8 2L4 6l4 4"/></svg></button>
        <span class="knob"><i class="ridge"></i></span>
        <button class="sb" aria-label="Scroll right"><svg viewBox="0 0 12 12"><path fill="none" stroke="#223" stroke-width="2" d="M4 2l4 4-4 4"/></svg></button>
      </div>
    </div>
    <svg class="corner" viewBox="0 0 18 18"><path stroke="#b8b8b0" stroke-width="2" stroke-dasharray="2 2" d="M6 15h10M10 11h6M14 7h2"/></svg>
  </section>
</main>

<div class="status-bar">
  <p>Click to select, TAB for alternates, CTRL adds, SHIFT unselects.</p>
  <span class="cell"></span><span class="cell num">NUM</span><span class="cell last"></span>
  <svg class="ico" viewBox="0 0 16 16"><path fill="#7ac" stroke="#357" d="M2 2l7 8-3 3zM2 2l7 2"/><path fill="#9bd" d="M2 12h6v3H1z"/><path fill="#ffe020" stroke="#a80" d="M10 5l5.500 10h-11z"/><path stroke="#111" stroke-width="1.500" d="M10 8.500v3.500M10 13v1.300"/></svg>
</div>

<footer class="taskbar">
  <button class="start"><svg viewBox="0 0 18 16"><path fill="#e8501c" d="M3 2c2-1 4-1 6 0L8 7C6 6 4 6 2 7z"/><path fill="#8cd030" d="M10 2c2 1 4 1 6 0l-1 5c-2 1-4 1-6 0z"/><path fill="#4a90f0" d="M2 8c2-1 4-1 6 0l-1 5c-2-1-4-1-6 0z"/><path fill="#fcc820" d="M9 8c2 1 4 1 6 0l-1 5c-2 1-4 1-6 0z"/></svg>start</button>
  <div class="quick">
    <button aria-label="Firefox"><svg class="ico" viewBox="0 0 16 16"><circle cx="8" cy="8" r="7" fill="#2860c0"/><path fill="#f07010" d="M2 3c-3 7 2 12 7 12 5-1 7-6 6-11-1 4-3 7-7 6-2-1-4-3-2-5-2 0-3-1-4-2z"/><path fill="#ffc030" d="M13 2c3 4 2 8-1 11 1-4 2-7 1-11z"/></svg></button>
    <button aria-label="Skype"><svg class="ico" viewBox="0 0 16 16"><circle cx="6" cy="6" r="5.500" fill="#20a8e8"/><circle cx="10" cy="10" r="5.500" fill="#20a8e8"/><circle cx="8" cy="8" r="6.200" fill="#20a8e8"/><path fill="none" stroke="#fff" stroke-width="2" d="M11 5.500C9 4 5 4 5.500 6.500S11 8 10.500 10.500 6 12 5 10"/></svg></button>
    <button aria-label="Desktop tool"><svg class="ico" viewBox="0 0 16 16"><path fill="#eee" stroke="#222" stroke-width="1.500" d="M2 9c0-9 12-10 12 0z"/><path fill="none" stroke="#222" stroke-width="1.300" d="M5 8l6-6M8 8l5-4M2 12h12"/><path fill="#20b8c8" stroke="#123" d="M1.500 10.500h5v4h-5zM9.500 10.500h5v4h-5z"/></svg></button>
    <button class="more" aria-label="More shortcuts">»</button>
  </div>
  <div class="tasks">
    <button class="task"><svg class="ico" viewBox="0 0 16 16"><circle cx="8" cy="8" r="7" fill="#2860c0"/><path fill="#f07010" d="M2 3c-3 7 2 12 7 12 5-1 7-6 6-11-1 4-3 7-7 6-2-1-4-3-2-5-2 0-3-1-4-2z"/><path fill="#ffc030" d="M13 2c3 4 2 8-1 11 1-4 2-7 1-11z"/></svg>Autodesk AutoCAD 2...</button>
    <button class="task active"><svg class="ico" viewBox="0 0 16 16"><path fill="#fff" stroke="#444" d="M.5.5h15v15H.5z"/><path fill="#b06ad8" d="M8 1h7v14H8z"/><path fill="#e8b890" d="M1 1h7v5H1z"/><path stroke="#301030" stroke-width="1.500" fill="none" d="M2 3h5M2 6h4M3 8v6M6 8v6"/><path stroke="#fff" fill="none" d="M10 3c4 0 4 3 1 4s-1 4 2 5"/></svg>Revit Architecture 20...</button>
    <button class="task"><svg class="ico" viewBox="0 0 16 16"><path fill="#fff" stroke="#bbb" d="M5.500 1.500h9v13h-9z"/><path fill="#1878c8" d="M2 1c6 1 9 5 10 12C6 12 2 8 2 1z"/><path fill="none" stroke="#50d880" stroke-width="1.500" d="M3 3c2 4 5 7 9 11"/></svg>Adobe Photoshop - [...</button>
  </div>
  <div class="lang">
    <button aria-label="Microphone"><svg class="ico" viewBox="0 0 16 16"><path stroke="#222" stroke-width="3.500" stroke-linecap="round" d="M10 5l3-3"/><path fill="none" stroke="#222" stroke-width="2" d="M10 5l-6 7c-2 2 0 3 2 2l3-2"/><path stroke="#eee" d="M9 6l-5 6M11 4l2-2"/></svg></button>
    <button aria-label="Tools"><svg class="ico" viewBox="0 0 16 16"><path fill="#fff" stroke="#222" d="M1.500 1.500h13v9h-13z"/><path fill="#12129c" d="M1 1h14v3H1z"/><path stroke="#222" stroke-width="2" d="M13 5l-5 7c-1 2 1 3 3 1"/><path stroke="#888" d="M3 6.500h5M3 8.500h4"/></svg></button>
    <button aria-label="Help"><svg class="ico" viewBox="0 0 16 16"><path fill="#ffffc0" stroke="#222" stroke-width="1.300" d="M2 1h12v12h-3l-2 2-1-2H2z"/><path fill="none" stroke="#1414b0" stroke-width="1.700" d="M5.500 5c0-3 5-3 5 0 0 2-2.500 2-2.500 4M8 10.500v1.500"/></svg></button>
    <button aria-label="Language bar options"><svg class="ico" viewBox="0 0 16 16"><path fill="none" stroke="#222" d="M6.500 1.500h5v3h-5zM4.500 3.500h5v3h-5z"/><path fill="#222" d="M5 11h6l-3 3z"/></svg></button>
  </div>
  <div class="tray">
    <button class="chevron" aria-label="Show hidden icons"><svg viewBox="0 0 12 12"><path fill="none" stroke="#fff" stroke-width="2" d="M7 2L3 6l4 4"/></svg></button>
    <svg class="ico" viewBox="0 0 16 16"><path fill="#3a4aa8" stroke="#889" d="M6.500 1.500h8v7h-8z"/><path fill="#28307c" stroke="#889" d="M1.500 5.500h8v6h-8z"/><path fill="#889" d="M3 13h5v2H3zM10 10h4v2h-4z"/></svg>
    <time>8:08 PM</time>
  </div>
</footer>
</body>
</html>
```
FILE: styles.css
```
* { box-sizing: border-box; }
body {
  margin: 0;
  min-height: 100vh;
  display: flex;
  flex-direction: column;
  overflow: hidden;
  background: #e0dfe4;
  color: #111;
  font: 10px/14px "DejaVu Sans Condensed", "DejaVu Sans", sans-serif;
}
button, select, input { font: inherit; color: inherit; margin: 0; }
button { padding: 0; border: 0; background: none; white-space: nowrap; }
h1, h2, p, ul { margin: 0; padding: 0; }
.ico { width: 16px; height: 16px; flex: none; display: block; }

/* title and menu */
.title-bar {
  height: 24px;
  flex: none;
  display: flex;
  align-items: center;
  gap: 7px;
  padding: 0 2px;
  border-top: 1px solid #5c5a78;
  border-bottom: 1px solid #8e8cab;
  background: linear-gradient(#f4f4fa 0, #a8a7c1 14%, #b9b8cd 40%, #e9e9f1 80%, #fff);
}
.title-bar h1 { flex: 1; font: bold 13px/20px Roboto, sans-serif; }
.window-buttons { display: flex; gap: 3px; }
.window-buttons button {
  width: 19px;
  height: 19px;
  border: 1px solid #6a6a90;
  border-radius: 3px;
  background: linear-gradient(#f4f4fb, #a9abc8);
}
.window-buttons .close { border-color: #a84444; background: linear-gradient(#f0a090, #c83430); }
.window-buttons svg { width: 16px; height: 16px; display: block; }
.menu-bar {
  height: 19px;
  flex: none;
  display: flex;
  align-items: center;
  padding-left: 3px;
  background: #dfe1ec;
  border-bottom: 1px solid #9a9aa4;
}
.menu-bar > button { padding: 0 6px 0 5px; height: 18px; }
.doc-buttons { margin-left: auto; display: flex; gap: 4px; padding-right: 2px; }
.doc-buttons button { width: 15px; height: 15px; background: #f2f2f0; border: 1px solid #fff; border-right-color: #ccc; border-bottom-color: #ccc; }
.doc-buttons svg { width: 12px; height: 12px; display: block; }

/* toolbars */
.toolbar-row {
  height: 29px;
  flex: none;
  display: flex;
  border-top: 1px solid #f8f8fa;
  border-bottom: 1px solid #a8a8b0;
  font-family: "Liberation Sans", Arial, sans-serif;
}
.band { display: flex; align-items: center; flex: none; border-right: 1px solid #a0a0a8; overflow: hidden; }
.standard { width: 372px; }
.views { width: 180px; }
.edit, .design { flex: 1; border-right: 0; }
.tools { width: 814px; }
.images { width: 242px; }
.grip { width: 3px; height: 23px; margin: 0 10px 0 3px; flex: none; border-left: 1px solid #fff; border-right: 1px solid #96969e; }
.sep { width: 2px; height: 20px; margin: 0 2px; flex: none; border-left: 1px solid #9a9aa2; border-right: 1px solid #fff; }
.sep.lead { margin-left: 6px; }
.band button { width: 22px; height: 22px; flex: none; display: flex; align-items: center; justify-content: center; }
.band button.lead { margin-left: 3px; }
.band button.narrow { width: 12px; }
.band .narrow .ico { width: 12px; }
.band button.labelled { width: auto; padding: 0 5px; gap: 2px; }
.band button.pressed { margin-left: 4px; border: 1px solid #8ea0b4; border-radius: 2px; background: #fff; }
.band button.off, .tool.off { color: #9c9ca2; text-shadow: 1px 1px #fff; }
.band button.more { width: 12px; height: 24px; align-items: flex-start; margin-left: auto; margin-right: 4px; font: bold 14px/14px "DejaVu Sans", sans-serif; }
.combo { position: relative; display: block; }
.combo select {
  display: block;
  width: 139px;
  height: 19px;
  appearance: none;
  border: 1px solid #d6d6c2;
  border-radius: 0;
  background: #fff;
}
.combo svg { position: absolute; right: 2px; top: 2px; width: 14px; height: 15px; background: #f0f0e8; border-left: 1px solid #deded0; }

.options-bar { height: 31px; flex: none; display: flex; align-items: center; padding-left: 4px; }
.combo.type select { width: 185px; background: #e2e1e4; }
.xp {
  width: 29px;
  height: 19px;
  margin-left: 7px;
  display: grid;
  place-items: center;
  border: 1px solid #4a6a96;
  border-radius: 3px;
  background: linear-gradient(#fff, #d4d4e4);
}
.xp.filter { width: 26px; margin-left: 10px; }
.sep.tall { margin: 0 7px 0 10px; }
.check { display: flex; align-items: center; gap: 3px; font-family: "Liberation Sans", Arial, sans-serif; }
.check input {
  appearance: none;
  width: 12px;
  height: 12px;
  display: grid;
  place-items: center;
  border: 1px solid #1c5180;
  background: #fff;
}
.check input:checked::after { content: ""; width: 3px; height: 6px; margin-bottom: 2px; border: solid #21a121; border-width: 0 2px 2px 0; transform: rotate(45deg); }

/* workspace */
.workspace { flex: 1; min-height: 0; display: grid; grid-template-columns: 95px 151px minmax(0, 1fr); border-top: 1px solid #8c8c98; }
.design-bar { display: flex; flex-direction: column; padding: 1px 3px 0 1px; border-left: 1px solid #77777f; background: #efefed; overflow: hidden; }
.tab {
  height: 17px;
  flex: none;
  width: 90px;
  padding-right: 4px;
  background: #dddde2;
  border: solid #222;
  border-width: 0 1px 1px 0;
}
.tool { height: 20px; flex: none; display: flex; align-items: center; gap: 2px; width: 90px; padding-left: 3px; overflow: hidden; text-align: left; }
.tool.modify { background: #fff; border-radius: 2px; }
.design-bar hr { width: 88px; flex: none; margin: 2px 0 1px; border: 0; height: 2px; border-top: 1px solid #999; border-bottom: 1px solid #fff; }
.tools-list { height: 250px; padding-top: 3px; display: grid; grid-auto-rows: 1fr; align-items: center; }
.tool.spaced { height: 23px; }
.tab-stack { margin-top: auto; display: flex; flex-direction: column; }

.browser {
  display: flex;
  flex-direction: column;
  min-width: 0;
  padding: 1px 9px 0 4px;
  border-left: 2px solid #55556a;
  background: #e2e1e9;
}
.browser header { height: 17px; flex: none; display: flex; align-items: center; justify-content: space-between; background: #e4e4ee; }
.browser h2 { font-size: 10px; line-height: 14px; color: #9b9ba8; white-space: nowrap; }
.browser header button { width: 12px; height: 12px; background: #e88084; border: 1px solid #d86a70; }
.browser header svg { display: block; width: 10px; height: 10px; }
.tree-box {
  flex: 1;
  min-height: 0;
  display: flex;
  flex-direction: column;
  overflow: hidden;
  background: #fff;
  border: solid #88889a;
  border-width: 1px 0 0 2px;
  font-family: "Liberation Sans", Arial, sans-serif;
}
.tree { list-style: none; margin-left: 19px; }
.tree.root { margin-left: 1px; flex: 1; padding-top: 1px; }
.tree li { position: relative; }
.tree li::before { content: ""; position: absolute; left: 7px; top: 0; bottom: 0; border-left: 1px dotted #aaa; }
.tree li:last-child::before { bottom: auto; height: 8px; }
.row { position: relative; height: 15px; display: flex; align-items: center; gap: 5px; padding-left: 24px; white-space: nowrap; }
.root > li > .row { padding-left: 18px; }
.row::before { content: ""; position: absolute; left: 8px; width: 13px; top: 7px; border-top: 1px dotted #aaa; }
.root > li > .row::before { width: 9px; }
.row .ico { width: 16px; height: 15px; }
.row .tog {
  position: absolute;
  left: 3px;
  top: 3px;
  width: 9px;
  height: 9px;
  border: 1px solid #8a9ab0;
  border-radius: 1px;
  background: linear-gradient(#222, #222) center / 5px 1px no-repeat, linear-gradient(#222, #222) center / 1px 5px no-repeat, #f4f4f0;
}
.row .tog.minus { background: linear-gradient(#222, #222) center / 5px 1px no-repeat, #f4f4f0; }
.current { font-weight: bold; background: #f0efe2; }

/* scroll bars */
.hscroll { height: 16px; flex: none; display: flex; margin-bottom: 3px; background: #f3f3f8; }
.thumb { width: 72px; display: grid; place-items: center; border: 1px solid #a0a0b8; border-radius: 2px; background: linear-gradient(#fff, #ccccdc); }
.hscroll .sb:last-child { margin-left: auto; }
.sb { width: 16px; height: 16px; flex: none; display: grid; place-items: center; border: 1px solid #a0a0b8; border-radius: 2px; background: linear-gradient(#fff, #d2d2e0); }
.sb svg { width: 11px; height: 11px; }
.knob { width: 15px; height: 15px; display: grid; place-items: center; border: 1px solid #a0a0b8; border-radius: 2px; background: linear-gradient(#fff, #d6d6e4); }
.ridge { width: 8px; height: 7px; background: repeating-linear-gradient(90deg, #a4a4b8 0 1px, #f4f4fa 1px 2px); }
.ridge.rows { background: repeating-linear-gradient(#a4a4b8 0 1px, #f4f4fa 1px 2px); }

.view {
  min-width: 0;
  display: grid;
  grid-template-columns: minmax(0, 1fr) 18px;
  grid-template-rows: minmax(0, 1fr) 18px;
  margin-bottom: 2px;
  border-left: 1px solid #666;
  background: #fff;
}
.drawing { width: 100%; height: 100%; display: block; min-height: 0; }
.level-text { font: 6px "DejaVu Sans", sans-serif; }
.vscroll { display: flex; flex-direction: column; align-items: center; justify-content: space-between; background: #f1f1f7; }
.view-bar { display: flex; align-items: center; background: #f5f5f9; }
.view-controls { display: flex; align-items: center; height: 18px; padding-left: 12px; background: #e4e3e8; }
.view-controls button { width: 20px; height: 16px; display: grid; place-items: center; }
.view-controls button .ico { width: 15px; height: 15px; }
.view-controls .scale { width: 58px; height: 16px; font-size: 11px; }
.track { flex: 1; display: flex; align-items: center; justify-content: space-between; }
.corner { width: 18px; height: 18px; background: #ececee; }

/* status and task bar */
.status-bar { height: 20px; flex: none; display: flex; align-items: center; border-top: 1px solid #aaa; background: linear-gradient(#d2d2da, #e4e4ea); padding: 0 4px 0 1px; }
.status-bar p { flex: 1; }
.cell { width: 26px; height: 15px; border-left: 1px solid #b8b8a8; }
.cell.num { width: 30px; text-align: center; border-right: 1px solid #b8b8a8; }
.cell.last { width: 34px; border-left: 0; border-right: 1px solid #b8b8a8; }
.taskbar {
  height: 27px;
  flex: none;
  display: flex;
  align-items: center;
  border-top: 1px solid #7c7c9c;
  background: linear-gradient(#fff 0, #a7a7c2 12%, #c0c0d0 35%, #dedee8 80%, #9a9ab4);
}
.start {
  width: 92px;
  height: 26px;
  display: flex;
  align-items: center;
  gap: 3px;
  padding: 0 0 2px 9px;
  border-radius: 0 8px 10px 0;
  background: linear-gradient(#2c7c2c 0, #7cc87c 12%, #3c963c 35%, #3c9c3c 75%, #246c24);
  box-shadow: inset -3px 0 4px #1f6a1f;
  color: #fff;
  font: italic bold 16px/20px "Liberation Sans", Arial, sans-serif;
  text-shadow: 1px 1px 1px #174d17;
}
.start svg { width: 20px; height: 18px; }
.quick { display: flex; align-items: center; gap: 6px; padding-left: 10px; width: 95px; }
.quick .more { font: bold 14px/14px "DejaVu Sans", sans-serif; margin: 0 0 8px 3px; }
.tasks { flex: 1; display: flex; gap: 2px; min-width: 0; }
.task {
  flex: 0 1 148px;
  min-width: 0;
  height: 23px;
  display: flex;
  align-items: center;
  gap: 3px;
  padding: 0 6px 2px;
  border: 1px solid #a0a0b8;
  border-radius: 2px;
  background: linear-gradient(#fff, #e4e4ee 40%, #c8c8d8);
}
.task.active { background: linear-gradient(#5c6a78, #75828e); border-color: #4c5866; color: #fff; }
.lang { display: flex; gap: 4px; padding-right: 12px; }
.tray { width: 87px; height: 26px; display: flex; align-items: center; gap: 2px; padding-bottom: 2px; border-left: 1px solid #666690; background: linear-gradient(#fff, #d4d4e4 60%, #a8a8c4); }
.chevron { width: 16px; height: 16px; flex: none; margin-left: -9px; display: grid; place-items: center; border-radius: 50%; background: radial-gradient(#b4b4c8, #77778f); border: 1px solid #667; }
.chevron svg { width: 10px; height: 10px; }
.tray time { margin-left: 7px; }
```
